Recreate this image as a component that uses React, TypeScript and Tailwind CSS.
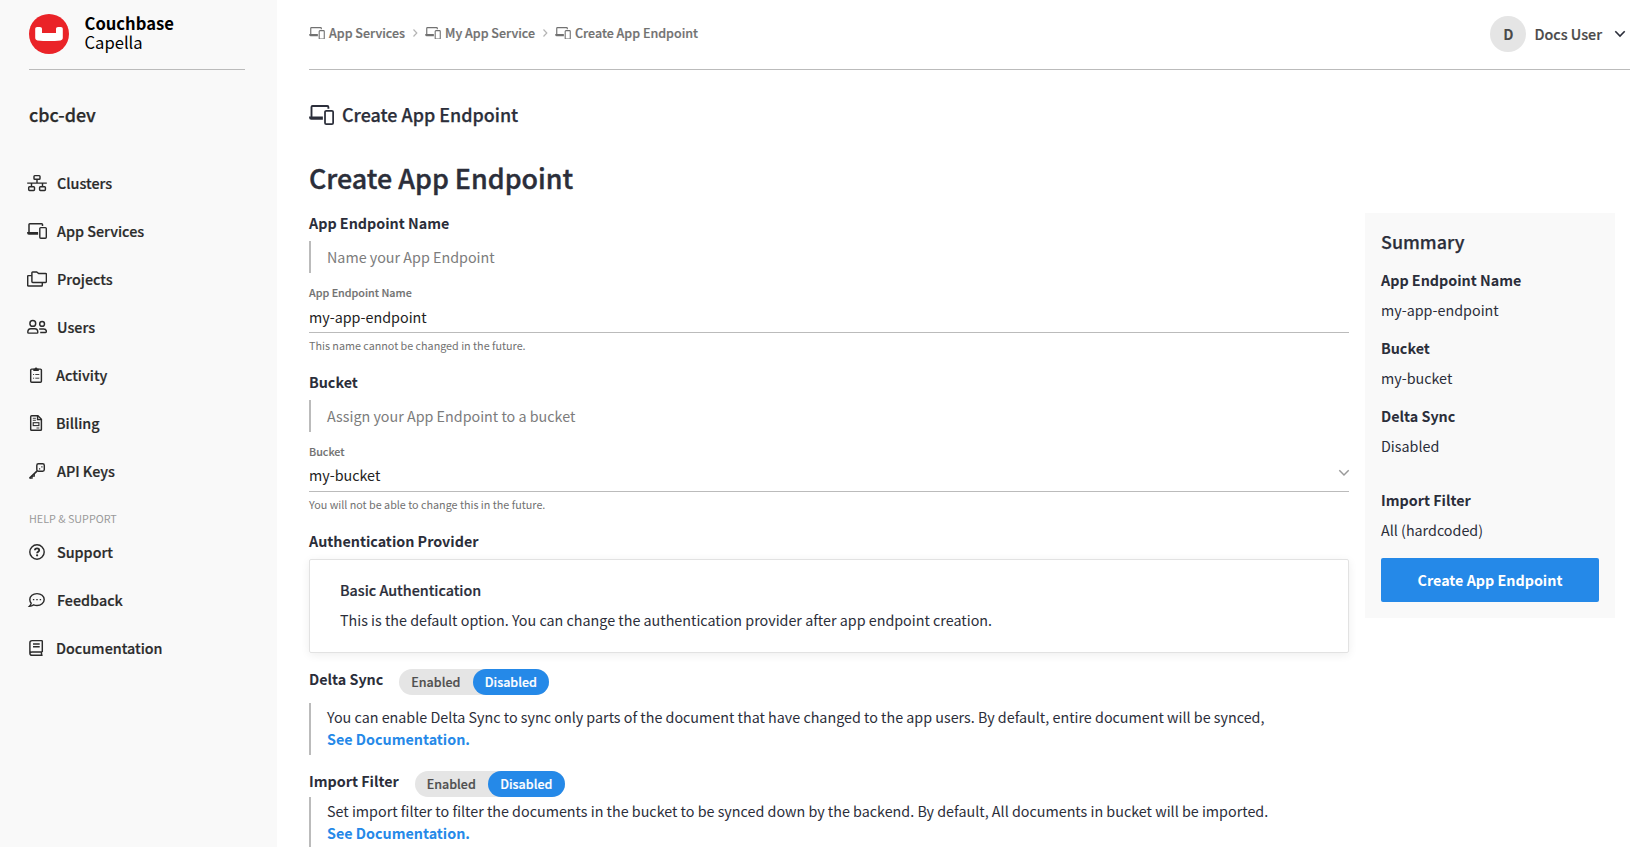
import type { ReactNode } from "react";

function DeviceShapes() {
  return (
    <>
      <path d="M2 9.5V1.6a.8.8 0 0 1 .8-.8h11.9a.8.8 0 0 1 .8.8V3" fill="none" stroke="currentColor" strokeWidth="1.5" />
      <path d="M.1 9.1h11v2.7H1.8A1.7 1.7 0 0 1 .1 10.1Z" fill="currentColor" />
      <rect x="12.8" y="4.6" width="6.5" height="10.7" rx="1" fill="none" stroke="currentColor" strokeWidth="1.4" />
    </>
  );
}

function Devices({ className }: { className: string }) {
  return (
    <svg viewBox="0 0 20 16" className={className}>
      <DeviceShapes />
    </svg>
  );
}

const icons: Record<string, ReactNode> = {
  clusters: (
    <>
      <rect x="7" y="3.6" width="6" height="3.6" rx=".8" />
      <path d="M10 7.2v3.9M.2 11.1h19.6M4.5 11.1v3.6M15.5 11.1v3.6" />
      <rect x="1.7" y="14.8" width="5.8" height="3.6" rx=".8" />
      <rect x="12.6" y="14.8" width="5.8" height="3.6" rx=".8" />
    </>
  ),
  services: (
    <g transform="translate(0 3)" stroke="none">
      <DeviceShapes />
    </g>
  ),
  projects: (
    <>
      <path d="M4.9 4.7c0-.5.3-.8.8-.8h4l2 1.6h6.9c.5 0 .8.3.8.8v7.3c0 .5-.3.8-.8.8H5.7c-.5 0-.8-.3-.8-.8Z" />
      <path d="M4.9 7.6H1.5c-.5 0-.8.3-.8.8v8.9c0 .5.3.8.8.8h13c.5 0 .8-.3.8-.8v-2.9" />
    </>
  ),
  users: (
    <>
      <circle cx="5.8" cy="7.4" r="2.9" />
      <path d="M.8 16.3c0-2.3 1.2-3.6 3-3.6h4c1.8 0 3 1.3 3 3.6 0 .5-.3.8-.8.8H1.6c-.5 0-.8-.3-.8-.8Z" />
      <circle cx="15.1" cy="7.9" r="2.4" />
      <path d="M12.2 12.9h4.4c1.7 0 2.8 1 2.8 2.7 0 .5-.3.8-.8.8h-5.4" />
    </>
  ),
  activity: (
    <>
      <rect x="3.7" y="5.1" width="10.7" height="13.2" rx="1" />
      <path d="M6.3 4.7h1.3a1.5 1.5 0 0 1 2.9 0h1.3v2.2H6.3Z" fill="currentColor" stroke="none" />
      <path d="M6 10.5h1.1M8.3 10.5h4M6 14.2h1.1M8.3 14.2h4" strokeWidth=".9" />
    </>
  ),
  billing: (
    <>
      <path d="M3.7 4.7c0-.5.4-.9.9-.9h6.3l3.5 3.5v10.1c0 .5-.4.9-.9.9H4.6c-.5 0-.9-.4-.9-.9Z" />
      <path d="M10.6 3.8v3.8h3.8" />
      <rect x="6.2" y="10.7" width="5.7" height="2.9" strokeWidth="1.1" />
      <path d="M5.8 6.3h3.1M5.8 8.3h3.1M9.5 16h2.8" strokeWidth=".9" />
    </>
  ),
  keys: (
    <>
      <rect x="9.8" y="3.8" width="7.5" height="7.4" rx="1.6" />
      <path d="m10.2 10.9-7.6 7.3" strokeWidth="1.6" />
      <path d="M2.4 18.1h2.7v-1.9h2.2v-2.1" strokeWidth="1.2" />
      <path d="M14.3 6.2h1.2v1.2h-1.2zM12 8.2h1.2v1.2H12z" fill="currentColor" stroke="none" />
    </>
  ),
  support: (
    <>
      <circle cx="10" cy="11" r="7.2" />
      <path d="M7.9 9.3c0-1.2.9-1.9 2.2-1.9 1.2 0 2.1.7 2.1 1.8 0 1.5-2.1 1.5-2.1 3" strokeWidth="1.8" />
      <circle cx="10.1" cy="14.3" r="1.1" fill="currentColor" stroke="none" />
    </>
  ),
  feedback: (
    <>
      <path d="M10 4.6c4 0 7.2 2.6 7.2 5.9s-3.2 5.9-7.2 5.9c-1.2 0-2.3-.2-3.3-.6-1.1.9-2.5 1.5-4.2 1.5.9-.9 1.5-2 1.7-3.1C3.3 13.2 2.8 11.9 2.8 10.5 2.8 7.2 6 4.6 10 4.6Z" />
      <path d="M5.9 9.9h1.4v1.3H5.9zM9.3 9.9h1.4v1.3H9.3zM12.7 9.9h1.4v1.3h-1.4z" fill="currentColor" stroke="none" />
    </>
  ),
  docs: (
    <>
      <path d="M15.3 15V4.4c0-.5-.3-.8-.8-.8H5C3.8 3.6 2.9 4.5 2.9 5.7v10.5c0 1.2.9 2.1 2.1 2.1h10.6M15.3 15H5c-1.2 0-2.1.7-2.1 1.6M14.5 15v3.3" />
      <path d="M6 7h6.7M6 9.7h6.7" />
    </>
  ),
};

function NavItem({ icon, label, narrow }: { icon: string; label: string; narrow?: boolean }) {
  return (
    <a className="flex h-12 items-center pb-px pl-[27px] text-[14.33px] leading-[21px] font-medium text-[#2b2b2b] [-webkit-text-stroke:0.2px]">
      <svg viewBox="0 0 20 21" className="h-[21px] w-5 shrink-0" fill="none" stroke="currentColor" strokeWidth="1.45">
        {icons[icon]}
      </svg>
      <span className={narrow ? "ml-[9px]" : "ml-[10px]"}>{label}</span>
    </a>
  );
}

function Sidebar() {
  return (
    <aside className="w-[277px] shrink-0 bg-[#f9f9f9]">
      <div className="ml-[29px] flex h-[70px] w-[216px] border-b border-[#bbbbbb] pt-[11px]">
        <svg viewBox="0 0 40 40" className="mt-[3px] size-10">
          <circle cx="20" cy="20" r="20" fill="#ea2328" />
          <path
            d="M8.2 13H10.9c1.4 0 2.1.7 2.1 2v4.1h14V15c0-1.3.7-2 2.1-2h2.7c1.3 0 2 .8 2 2v8.8c0 1.5-.8 2.4-2.2 2.6-7.7.7-15.500.7-23.200 0-1.400-.2-2.200-1.100-2.200-2.600V15c0-1.200.7-2 2-2Z"
            fill="#fff"
          />
        </svg>
        <div className="ml-[15.5px] text-[16.6px] leading-[20px] text-black">
          <div className="mt-[2px] font-bold">Couchbase</div>
          <div className="-mt-px">Capella</div>
        </div>
      </div>
      <div className="mt-[31px] ml-[29px] text-[17.9px] leading-[26px] font-medium text-[#2b2b2b] [-webkit-text-stroke:0.25px]">
        cbc-dev
      </div>
      <nav className="mt-8">
        <NavItem icon="clusters" label="Clusters" />
        <NavItem icon="services" label="App Services" />
        <NavItem icon="projects" label="Projects" />
        <NavItem icon="users" label="Users" />
        <NavItem icon="activity" label="Activity" narrow />
        <NavItem icon="billing" label="Billing" narrow />
        <NavItem icon="keys" label="API Keys" />
        <div className="mt-4 mb-[2px] ml-[29px] text-[10.75px] leading-[15px] text-[#9a9a9a]">HELP &amp; SUPPORT</div>
        <NavItem icon="support" label="Support" />
        <NavItem icon="feedback" label="Feedback" />
        <NavItem icon="docs" label="Documentation" narrow />
      </nav>
    </aside>
  );
}

function CrumbArrow() {
  return (
    <svg viewBox="0 0 6 8" className="mr-[7px] ml-[7px] h-2 w-[6px]" fill="none" stroke="#b5b5b5" strokeWidth="1.2">
      <path d="m1.5.5 3.3 3.5-3.3 3.5" />
    </svg>
  );
}

function Crumb({ label }: { label: string }) {
  return (
    <a className="flex items-center gap-1">
      <Devices className="mt-px h-[12.5px] w-4" />
      {label}
    </a>
  );
}

function Header() {
  return (
    <header className="flex h-[70px] justify-between border-b border-[#bbbbbb]">
      <div className="mt-[23px] flex h-[19px] items-center text-[12.5px] leading-[19px] font-medium text-[#717171] [-webkit-text-stroke:0.2px]">
        <Crumb label="App Services" />
        <CrumbArrow />
        <Crumb label="My App Service" />
        <CrumbArrow />
        <Crumb label="Create App Endpoint" />
      </div>
      <div className="mt-4 mr-1 flex h-9 items-center text-[14.33px] leading-[21px] text-[#4a4a4a]">
        <div className="flex size-9 items-start justify-center rounded-full bg-[#e5e5e5] pt-[7px] font-bold">D</div>
        <span className="mb-px ml-2 font-medium [-webkit-text-stroke:0.2px]">Docs User</span>
        <svg viewBox="0 0 12 8" className="mb-px ml-[12px] h-2 w-3" fill="none" stroke="#2b2e3a" strokeWidth="1.6">
          <path d="m1.3 1.3 4.7 4.7 4.7-4.7" />
        </svg>
      </div>
    </header>
  );
}

function Quote({ className, children }: { className: string; children: ReactNode }) {
  return <div className={`border-l-2 border-[#bbbbbb] pl-4 ${className}`}>{children}</div>;
}

function Toggle() {
  return (
    <div className="mt-px ml-4 flex h-[26px] rounded-full bg-[#e5e5e5] text-[12.5px] leading-[19px] font-medium [-webkit-text-stroke:0.2px]">
      <span className="w-[73.5px] pt-[3px] pl-3 text-[#4f4f4f]">Enabled</span>
      <span className="w-[76.5px] rounded-full bg-[#2589e8] pt-[3px] pl-3 text-white">Disabled</span>
    </div>
  );
}

function Form() {
  return (
    <div className="w-[1040px]">
      <div className="font-bold">App Endpoint Name</div>
      <Quote className="mt-2 h-8 pt-[5px] text-[#7c7c7c]">Name your App Endpoint</Quote>
      <div className="mt-3 text-[10.75px] leading-[15px] font-medium text-[#717171] [-webkit-text-stroke:0.15px]">
        App Endpoint Name
      </div>
      <div className="mt-[6px] border-b border-[#bbbbbb] pb-[5px] text-[#222222]">my-app-endpoint</div>
      <div className="mt-[5px] text-[10.75px] leading-[15px] text-[#717171]">This name cannot be changed in the future.</div>

      <div className="mt-[18px] font-bold">Bucket</div>
      <Quote className="mt-2 h-8 pt-[5px] text-[#7c7c7c]">Assign your App Endpoint to a bucket</Quote>
      <div className="mt-3 text-[10.75px] leading-[15px] font-medium text-[#717171] [-webkit-text-stroke:0.15px]">Bucket</div>
      <div className="mt-[5px] flex justify-between border-b border-[#bbbbbb] pb-[6px] text-[#222222]">
        my-bucket
        <svg viewBox="0 0 12 8" className="mt-[5px] -mr-px h-2 w-3" fill="none" stroke="#9a9a9a" strokeWidth="1.5">
          <path d="m1.3 1.3 4.7 4.7 4.7-4.7" />
        </svg>
      </div>
      <div className="mt-[5px] text-[10.75px] leading-[15px] text-[#717171]">You will not be able to change this in the future.</div>

      <div className="mt-[18px] font-bold">Authentication Provider</div>
      <div className="mt-2 h-[94px] rounded-[2px] border border-[#e2e2e2] pt-[19px] pl-[30px] shadow-[0_2px_10px_rgba(0,0,0,0.07)]">
        <div className="font-medium [-webkit-text-stroke:0.2px]">Basic Authentication</div>
        <div className="mt-[9px]">
          This is the default option. You can change the authentication provider after app endpoint creation.
        </div>
      </div>

      <div className="mt-[15px] flex items-start">
        <span className="font-bold">Delta Sync</span>
        <Toggle />
      </div>
      <Quote className="mt-2 h-[52px] pt-[3px]">
        <div className="whitespace-nowrap">
          You can enable Delta Sync to sync only parts of the document that have changed to the app users. By default, entire
          document will be synced,
        </div>
        <a className="mt-px block font-bold text-[#2589e8]">See Documentation.</a>
      </Quote>

      <div className="mt-[15px] flex items-start">
        <span className="font-bold">Import Filter</span>
        <Toggle />
      </div>
      <Quote className="h-[52px] pt-[3px]">
        <div className="whitespace-nowrap">
          Set import filter to filter the documents in the bucket to be synced down by the backend. By default, All documents
          in bucket will be imported.
        </div>
        <a className="mt-px block font-bold text-[#2589e8]">See Documentation.</a>
      </Quote>
    </div>
  );
}

function SummaryItem({ label, value, className }: { label: string; value: string; className: string }) {
  return (
    <div className={className}>
      <div className="font-bold">{label}</div>
      <div className="mt-[9px]">{value}</div>
    </div>
  );
}

function Summary() {
  return (
    <div className="mt-px ml-4 h-[405px] w-[250px] bg-[#f9f9f9] px-4 pt-[15px]">
      <div className="text-[17.9px] leading-[26px] font-medium [-webkit-text-stroke:0.25px]">Summary</div>
      <SummaryItem className="mt-[15px]" label="App Endpoint Name" value="my-app-endpoint" />
      <SummaryItem className="mt-[17px]" label="Bucket" value="my-bucket" />
      <SummaryItem className="mt-[17px]" label="Delta Sync" value="Disabled" />
      <SummaryItem className="mt-[33px]" label="Import Filter" value="All (hardcoded)" />
      <button className="mt-[18px] block h-11 w-full rounded-[2px] bg-[#2589e8] pb-px font-bold text-white">
        Create App Endpoint
      </button>
    </div>
  );
}

export default function App() {
  return (
    <div className="flex h-screen overflow-hidden bg-white font-['Noto_Sans_CJK_SC','Noto_Sans',sans-serif]">
      <Sidebar />
      <main className="ml-8 w-[1321px] shrink-0 text-[14.32px] leading-[21px] text-[#2b2e3a]">
        <Header />
        <div className="mt-[31px] flex items-center gap-2 text-[17.92px] leading-[26px] font-medium [-webkit-text-stroke:0.25px]">
          <Devices className="mt-[2px] h-5 w-[25px]" />
          Create App Endpoint
        </div>
        <h1 className="mt-[31px] text-[26.87px] leading-[39px] font-medium [-webkit-text-stroke:0.4px]">
          Create App Endpoint
        </h1>
        <div className="mt-[15px] flex items-start">
          <Form />
          <Summary />
        </div>
      </main>
    </div>
  );
}
